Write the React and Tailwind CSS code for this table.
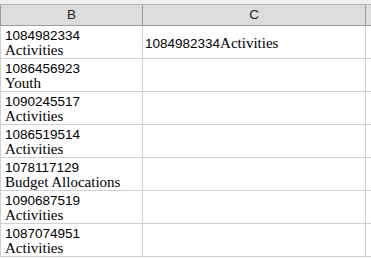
import React from 'react';

const rows = [
  { id: '1084982334', label: 'Activities', joined: true },
  { id: '1086456923', label: 'Youth' },
  { id: '1090245517', label: 'Activities' },
  { id: '1086519514', label: 'Activities' },
  { id: '1078117129', label: 'Budget Allocations' },
  { id: '1090687519', label: 'Activities' },
  { id: '1087074951', label: 'Activities' },
];

const Num = ({ children }) => (
  <span className="font-['Liberation_Sans',Arial,sans-serif] text-[13.5px]">{children}</span>
);

const Word = ({ children }) => (
  <span className="font-['Liberation_Serif','Times_New_Roman',serif] text-[15px]">{children}</span>
);

const App = () => {
  return (
    <div className="w-[371px] h-[258px] overflow-hidden bg-white text-black">
      <div className="h-[5px] bg-[#efefef] border-b border-[#b4b4b4]" />
      <div className="flex h-[21px] bg-[#dcdcdc] border-b border-[#9e9e9e] text-[13.5px] text-[#222] font-['Liberation_Sans',Arial,sans-serif]">
        <div className="w-[1px] bg-[#9e9e9e]" />
        <div className="w-[142px] flex items-center justify-center border-r border-[#9e9e9e]">B</div>
        <div className="w-[223px] flex items-center justify-center border-r border-[#9e9e9e]">C</div>
        <div className="flex-1" />
      </div>
      {rows.map((r) => (
        <div key={r.id} className="flex h-[33px] border-b border-[#d0d0d0]">
          <div className="w-[1px] bg-[#d0d0d0]" />
          <div className="w-[142px] border-r border-[#d0d0d0] pl-[4px] pt-[2px] flex flex-col overflow-hidden leading-[15px]">
            <Num>{r.id}</Num>
            <Word>{r.label}</Word>
          </div>
          <div className="w-[223px] border-r border-[#d0d0d0] pl-[2px] pt-[2px] flex items-center leading-[16px]">
            {r.joined && (
              <span>
                <Num>{r.id}</Num>
                <Word>{r.label}</Word>
              </span>
            )}
          </div>
          <div className="flex-1" />
        </div>
      ))}
    </div>
  );
};

export default App;
